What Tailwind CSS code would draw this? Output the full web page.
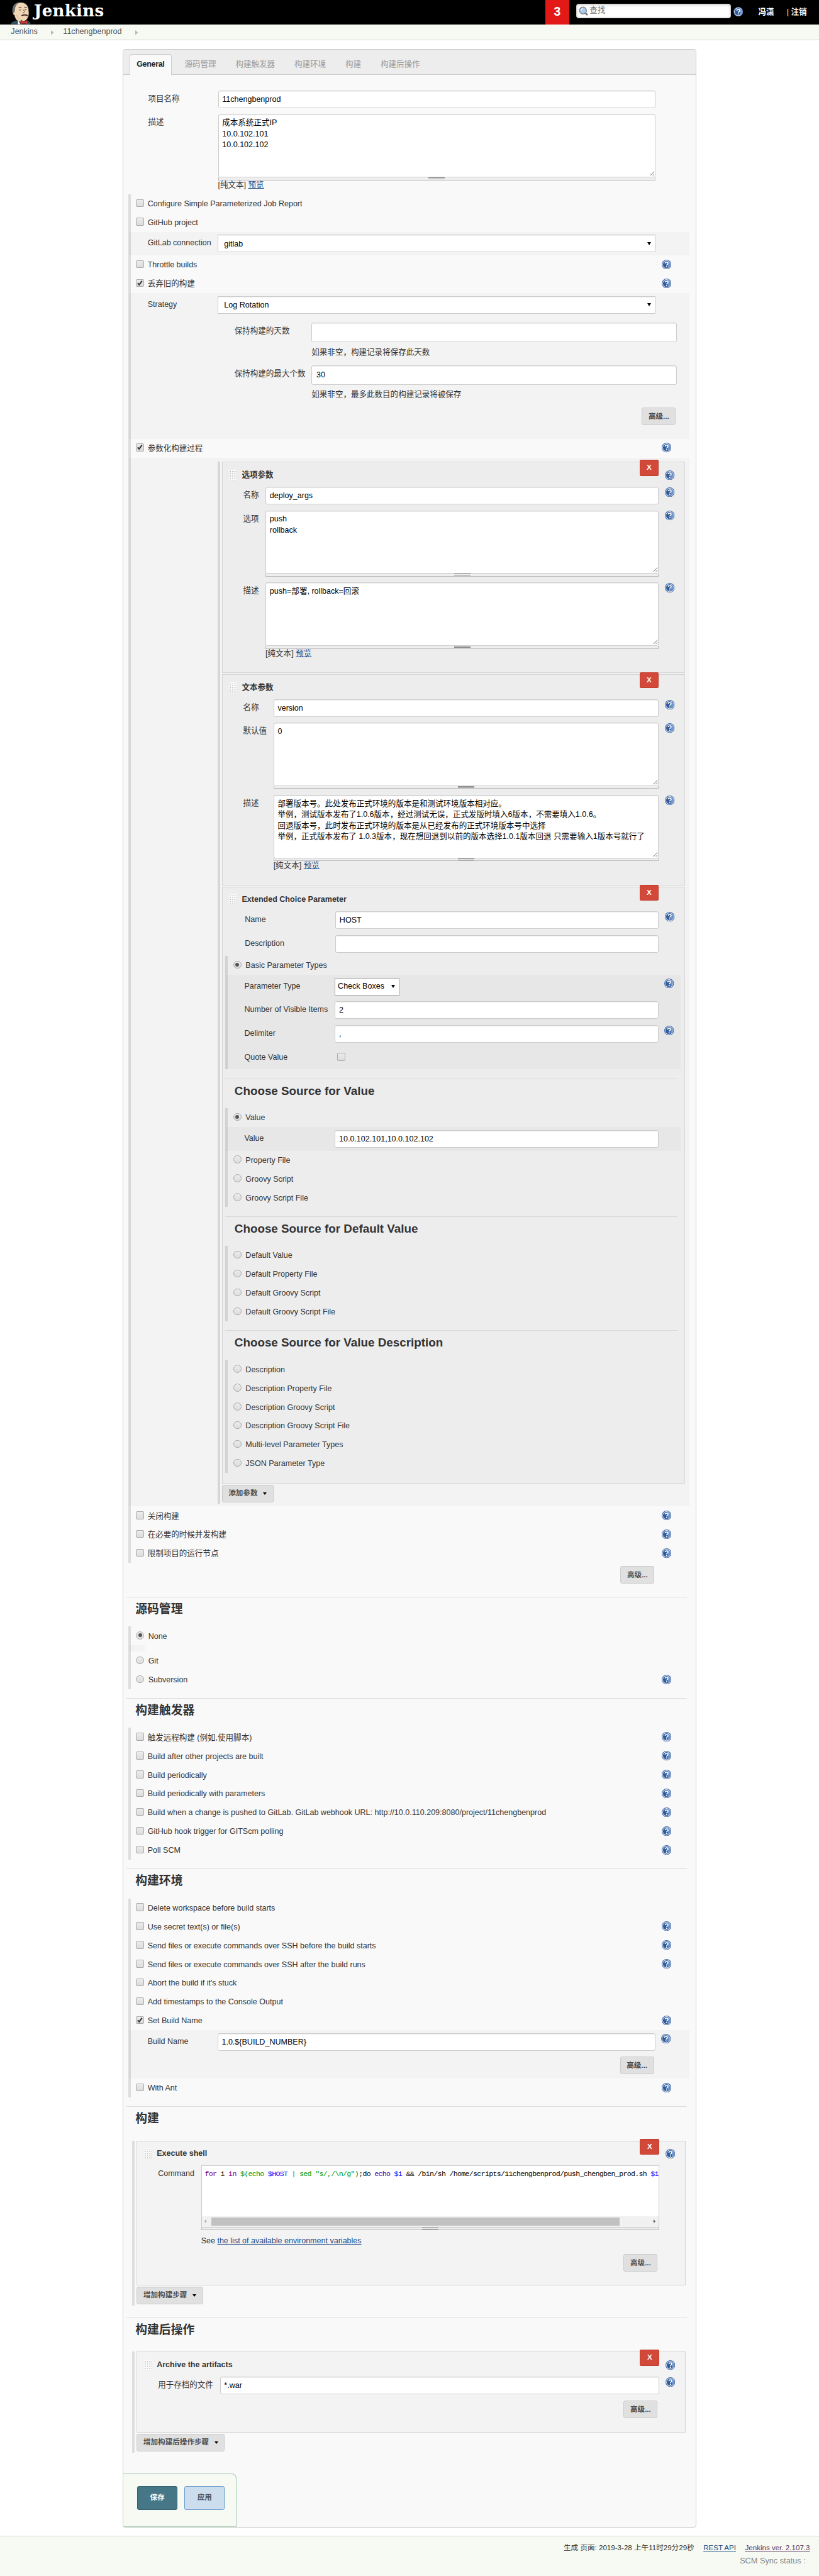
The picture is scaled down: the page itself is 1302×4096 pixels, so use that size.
<!DOCTYPE html>
<html lang="zh-CN">
<head>
<meta charset="utf-8">
<title>11chengbenprod Config [Jenkins]</title>
<script src="https://cdn.jsdelivr.net/npm/@tailwindcss/browser@4"></script>
</head>
<body class="bg-white overflow-x-hidden">
<svg class="hidden">
  <symbol id="help" viewBox="0 0 16 16">
    <circle cx="8" cy="8" r="7.9" fill="#3b64a3"/>
    <circle cx="8" cy="8" r="6.9" fill="#e4ebf5"/>
    <circle cx="8" cy="8" r="6" fill="#2f5a9c"/>
    <path d="M8 2a6 6 0 0 1 6 6a6 6 0 0 1-4 5.6C11 10 10 5 8 2z" fill="#6d92c8"/>
    <path d="M5.7 6.2C5.7 3.5 10.3 3.5 10.3 6.1C10.3 7.7 8.1 7.8 8.1 9.6" fill="none" stroke="#fff" stroke-width="1.7"/>
    <circle cx="8.1" cy="11.7" r="1.1" fill="#fff"/>
  </symbol>
  <symbol id="grip" viewBox="0 0 12 18">
    <rect width="12" height="18" fill="#fbfbfb"/>
    <g fill="#999">
      <path d="M1 2h1v1h-1zM4 2h1v1h-1zM7 2h1v1h-1zM10 2h1v1h-1zM1 5h1v1h-1zM4 5h1v1h-1zM7 5h1v1h-1zM10 5h1v1h-1zM1 8h1v1h-1zM4 8h1v1h-1zM7 8h1v1h-1zM10 8h1v1h-1zM1 11h1v1h-1zM4 11h1v1h-1zM7 11h1v1h-1zM10 11h1v1h-1zM1 14h1v1h-1zM4 14h1v1h-1zM7 14h1v1h-1zM10 14h1v1h-1zM1 17h1v1h-1zM4 17h1v1h-1zM7 17h1v1h-1zM10 17h1v1h-1z"/>
    </g>
  </symbol>
  <symbol id="tick" viewBox="0 0 11 11"><path d="M2 5.5L4.4 8.2L9 1.8" fill="none" stroke="#333" stroke-width="2.2"/></symbol>
  <symbol id="corner" viewBox="0 0 8 8"><path d="M0.5 7.5L7.5 0.5M4.5 7.5L7.5 4.5" stroke="#555" stroke-width="0.9"/></symbol>
  <symbol id="crumb" viewBox="0 0 5 8"><path d="M0 0L4.5 4L0 8z" fill="#b5b5b5"/></symbol>
</svg>

<div id="page" class="[zoom:0.96514] w-[1349px] h-[4244px] flex flex-col text-[13px] leading-[18px] text-[#333] font-['Liberation_Sans','Noto_Sans_CJK_SC',sans-serif] whitespace-nowrap">

  <header class="h-[40px] shrink-0 bg-black flex">
    <div class="flex w-[898px] pl-[18px]">
      <svg class="w-[33px] h-[40px]" viewBox="0 0 33 40">
        <path d="M0 40C1 36 7 34 11 34L24 33C29 34 32 36 33 40z" fill="#335061"/>
        <path d="M4 17C2 8 10 4 17 4C26 4 30 11 30 19C31 26 28 34 20 36C12 38 7 32 6 25C3 24 3 20 4 17z" fill="#f0d6b7" stroke="#2a2018" stroke-width="1"/>
        <path d="M3 21C1 11 7 3 16 4C9 6 7 12 7 17L5 22z" fill="#6d6b6d"/>
        <path d="M13 13C14 11.500 17 11.500 18 13M22 12.500C24 11 26 12 27 13M14 16.500h3M23 16h3M21 16C23 19 23 21 20 21" fill="none" stroke="#3b2a20" stroke-width="1"/>
        <path d="M18 26C20 23.500 23 25 25 24.500C26 26 27 25 28 25.500" fill="none" stroke="#3b2a20" stroke-width="2"/>
        <path d="M10 24C11 29 14 31 16 32" fill="none" stroke="#c9a98a" stroke-width="1"/>
        <path d="M17 33L22 36L27 33.500L28 40L22 38L16 40z" fill="#d33833" stroke="#7a1512" stroke-width=".7"/>
        <path d="M12 33L16 40H12z" fill="#fff"/>
      </svg>
      <span class="ml-[5px] font-['DejaVu_Serif',serif] font-bold text-[27px] leading-[36px] tracking-[0.3px] text-white">Jenkins</span>
    </div>
    <div class="w-[40px] bg-[#e31918] text-white font-bold text-[20px] leading-[40px] text-center">3</div>
    <div class="ml-[11px] mt-[6px] w-[255px] h-[24px] rounded-[4px] border border-[#ccc] bg-white shadow-[inset_0_1px_4px_rgba(0,0,0,0.2)] flex items-center pl-[3px] text-[#757575]">
      <svg class="w-[16px] h-[16px]" viewBox="0 0 16 16"><path d="M10.500 10.500L14.500 14.500" stroke="#777" stroke-width="2.800"/><circle cx="7" cy="7" r="5.700" fill="#a9c9ee" stroke="#858585" stroke-width="1.500"/><path d="M4 7C4 5 5.500 4 7 4" stroke="#fff" stroke-width="1.200" fill="none"/></svg>
      <span class="ml-[2px] -mt-[1px]">查找</span>
    </div>
    <svg class="ml-[4px] mt-[11px] w-[16px] h-[16px]"><use href="#help"/></svg>
    <div class="ml-[25px] leading-[40px] text-white font-bold w-[47px]">冯潇</div>
    <div class="leading-[40px] text-white font-bold"><span class="font-normal">|</span>&nbsp;注销</div>
  </header>

  <nav class="h-[26px] shrink-0 bg-[#f6faf2] border-b border-[#d3d7cf] flex items-center text-[#4d545d] pl-[18px]">
    <span>Jenkins</span>
    <svg class="ml-[22px] mt-[2px] w-[5px] h-[8px]"><use href="#crumb"/></svg>
    <span class="ml-[15px]">11chengbenprod</span>
    <svg class="ml-[22px] mt-[2px] w-[5px] h-[8px]"><use href="#crumb"/></svg>
  </nav>

  <main id="config" class="mt-[15px] ml-[202px] w-[945px] h-[4083px] shrink-0 border border-[#ccc] rounded-[4px] bg-[#f9f9f9] flex flex-col"></main>

  <footer class="mt-[14px] h-[66px] shrink-0 bg-[#f6faf2] border-t border-[#d3d7cf] pr-[15px] text-right">
    <div class="pt-[10px] flex justify-end gap-[15px] text-[12px]">
      <span>生成 页面: 2019-3-28 上午11时29分29秒</span>
      <a class="underline text-[#204a87]">REST API</a>
      <a class="underline text-[#5c3566]">Jenkins ver. 2.107.3</a>
    </div>
    <div class="pt-[3px] pr-[7px] text-[#888] text-[13.2px]">SCM Sync status :</div>
  </footer>
</div>

<script>
const box = (type, on) => type === 'radio'
  ? `<span class="w-[13px] h-[13px] rounded-full border border-[#aaa] bg-linear-to-b from-[#ececec] to-[#dcdcdc] flex items-center justify-center">${on ? '<span class="w-[6px] h-[6px] rounded-full bg-[#555]"></span>' : ''}</span>`
  : `<span class="w-[13px] h-[13px] rounded-[2px] border border-[#aaa] bg-linear-to-b from-[#ececec] to-[#dcdcdc] flex items-center justify-center">${on ? '<svg class="w-[11px] h-[11px] shrink-0"><use href="#tick"/></svg>' : ''}</span>`;
const help = cls => `<svg class="w-[16px] h-[16px] shrink-0 ${cls}"><use href="#help"/></svg>`;

// One selectable line: checkbox or radio, its label, optional help icon.
const line = (type, text, on, hasHelp) => `
  <div class="h-[31px] shrink-0 flex items-start">
    <span class="mt-[8px] ml-[9px]">${box(type, on)}</span>
    <span class="${type === 'radio' ? 'ml-[7px]' : 'ml-[6px]'} mt-[7.5px]">${text}</span>
    ${hasHelp ? help('ml-auto mr-[30px] mt-[7px]') : ''}
  </div>`;
const check = (text, hasHelp, on) => line('check', text, on, hasHelp);
const radio = (text, on, hasHelp) => line('radio', text, on, hasHelp);

const input = (w, text = '') => `<div class="${w} h-[29px] shrink-0 rounded-[3px] border border-[#ccc] bg-white shadow-[inset_0_1px_1px_rgba(0,0,0,0.075)] pl-[6px] leading-[28px] text-black">${text}</div>`;
const select = (w, text) => `<div class="${w} h-[29px] shrink-0 border border-[#ccc] bg-white shadow-[inset_0_1px_1px_rgba(0,0,0,0.075)] flex justify-between items-center pl-[10px] pr-[6px] text-black"><span class="pt-[2px]">${text}</span><span class="border-x-[3.5px] border-x-transparent border-t-[6px] border-t-black"></span></div>`;
const grabber = w => `<div class="${w} h-[5px] border border-t-0 border-[#bbb] bg-[#eee] flex justify-center items-center"><span class="w-[27px] h-[3px] border-y border-[#888]"></span></div>`;
const area = (w, text) => `<div class="${w} shrink-0">
    <div class="h-[104px] relative rounded-[3px] border border-[#ccc] bg-white shadow-[inset_0_1px_1px_rgba(0,0,0,0.075)] pl-[6px] pt-[5px] text-black whitespace-pre">${text}<svg class="absolute right-[1px] bottom-[1px] w-[8px] h-[8px]"><use href="#corner"/></svg></div>
    ${grabber('w-full')}</div>`;
const preview = pad => `<div class="${pad} -mt-[1px] h-[19px]">[纯文本] <a class="underline text-[#204a87]">预览</a></div>`;

// A labelled form row; the control sits 5px below the row's top edge.
const row = (h, pad, labelW, label, control, hasHelp) => `
  <div class="${h} ${pad} shrink-0 pt-[5px] flex items-start">
    <span class="${labelW} shrink-0 leading-[29px]">${label}</span>${control}${hasHelp ? help('ml-[10px] mt-[1px]') : ''}
  </div>`;
const button = (cls, text) => `<div class="${cls} h-[29px] shrink-0 rounded-[3px] border border-[#ccc] bg-[#e0e0e0] text-[12px] font-bold text-[#4d4d4d] leading-[27px] text-center">${text}</div>`;
const menuButton = (cls, text) => `<div class="${cls} h-[29px] shrink-0 rounded-[3px] border border-[#ccc] bg-[#e0e0e0] text-[12px] font-bold text-[#4d4d4d] flex items-center justify-between px-[10px]"><span>${text}</span><span class="border-x-[4px] border-x-transparent border-t-[5px] border-t-black"></span></div>`;
const section = (title, cls = 'mt-[15px]') => `<div class="${cls} ml-[5px] w-[923px] shrink-0 h-[49px] border-t border-[#ddd] pl-[15px] leading-[40px] text-[19.5px] font-bold">${title}</div>`;
const subSection = title => `<div class="mt-[15px] w-[745px] shrink-0 h-[49px] border-t border-[#d8d8d8] pl-[15px] leading-[39px] text-[19.5px] font-bold">${title}</div>`;
const group = inner => `<div class="ml-[8px] w-[925px] shrink-0 border-l-[5px] border-[#ddd] flex flex-col">${inner}</div>`;
const shade = (h, inner) => `<div class="${h} -ml-[3px] pl-[3px] bg-black/[0.025] shrink-0 flex flex-col">${inner}</div>`;

// Bordered, draggable block with its delete button hanging over the top edge.
const block = (cls, title, hasHelp, inner) => `
  <div class="${cls} relative shrink-0 border border-[#d5d5d5] bg-black/[0.025]">
    <div class="absolute right-[42px] -top-[4px] w-[32px] h-[26px] rounded-[2px] border border-[#c13c2c] bg-[#d24939] text-white text-[12px] font-bold leading-[24px] text-center">X</div>
    <div class="h-[35px] flex items-start pl-[12px]">
      <svg class="w-[12px] h-[18px] mt-[12px]"><use href="#grip"/></svg>
      <span class="ml-[8px] mt-[12px] font-bold">${title}</span>
      ${hasHelp ? help('ml-auto mr-[16px] mt-[13px]') : ''}
    </div>
    ${inner}
  </div>`;

const tabs = ['源码管理', '构建触发器', '构建环境', '构建', '构建后操作'];

const extended = `
  ${row('h-[39px]', 'pl-[37px]', 'w-[149px]', 'Name', input('w-[533px]', 'HOST'), true)}
  ${row('h-[39px]', 'pl-[37px]', 'w-[149px]', 'Description', input('w-[533px]'))}
  <div class="ml-[5px] w-[750px] flex flex-col">
    <div class="border-l-[5px] border-[#d3d3d3] flex flex-col">
      ${radio('Basic Parameter Types', true)}
      ${shade('h-[156px]', `
        ${row('h-[39px]', 'pl-[27px]', 'w-[149px]', 'Parameter Type', `<div class="w-[106px] h-[29px] shrink-0 border border-[#a9a9a9] bg-white flex items-center justify-between pl-[4px] pr-[6px] text-black">Check Boxes<span class="border-x-[3.5px] border-x-transparent border-t-[6px] border-t-black"></span></div><span class="w-[427px]"></span>`, true)}
        ${row('h-[39px]', 'pl-[27px]', 'w-[149px]', 'Number of Visible Items', input('w-[533px]', '2'))}
        ${row('h-[39px]', 'pl-[27px]', 'w-[149px]', 'Delimiter', input('w-[533px]', ','), true)}
        ${row('h-[39px]', 'pl-[27px]', 'w-[149px]', 'Quote Value', `<span class="ml-[4px] mt-[7px]">${box('check')}</span>`)}`)}
    </div>
    ${subSection('Choose Source for Value')}
    <div class="border-l-[5px] border-[#d3d3d3] flex flex-col">
      ${radio('Value', true)}
      ${shade('h-[39px]', row('h-[39px]', 'pl-[27px]', 'w-[149px]', 'Value', input('w-[533px]', '10.0.102.101,10.0.102.102')))}
      ${['Property File', 'Groovy Script', 'Groovy Script File'].map(t => radio(t)).join('')}
    </div>
    ${subSection('Choose Source for Default Value')}
    <div class="border-l-[5px] border-[#d3d3d3] flex flex-col">
      ${['Default Value', 'Default Property File', 'Default Groovy Script', 'Default Groovy Script File'].map(t => radio(t)).join('')}
    </div>
    ${subSection('Choose Source for Value Description')}
    <div class="border-l-[5px] border-[#d3d3d3] flex flex-col">
      ${['Description', 'Description Property File', 'Description Groovy Script', 'Description Groovy Script File', 'Multi-level Parameter Types', 'JSON Parameter Type'].map(t => radio(t)).join('')}
    </div>
  </div>`;

const versionNote = `部署版本号。此处发布正式环境的版本是和测试环境版本相对应。
举例，测试版本发布了1.0.6版本，经过测试无误，正式发版时填入6版本，不需要填入1.0.6。
回退版本号，此时发布正式环境的版本是从已经发布的正式环境版本号中选择
举例，正式版本发布了 1.0.3版本，现在想回退到以前的版本选择1.0.1版本回退 只需要输入1版本号就行了`;

const shell = `<span class="text-[#770088]">for</span> i <span class="text-[#770088]">in</span> <span class="text-[#009900]">$(echo <span class="text-[#0000ff]">$HOST</span> | sed "s/,/\\n/g")</span>;do <span class="text-[#3300aa]">echo</span> <span class="text-[#0000ff]">$i</span> &amp;&amp; /bin/sh /home/scripts/11chengbenprod/push_chengben_prod.sh <span class="text-[#0000ff]">$i</span>`;

document.getElementById('config').innerHTML = `
  <div class="h-[41px] shrink-0 bg-[#ededed] rounded-t-[4px] border-b border-[#ccc] pt-[7px] pl-[10px] flex text-[#999]">
    <span class="h-[34px] w-[70px] rounded-t-[4px] border border-b-0 border-[#ccc] bg-[#f9f9f9] text-[#222] text-center leading-[33px] font-bold tracking-[-0.35px]">General</span>
    ${tabs.map((t, i) => `<span class="${i ? 'ml-[32px]' : 'ml-[21px]'} leading-[34px]">${t}</span>`).join('')}
  </div>
  <div class="h-[21px] shrink-0"></div>
  ${row('h-[39px]', 'pl-[41px]', 'w-[115px]', '项目名称', input('w-[721px]', '11chengbenprod'))}
  ${row('h-[114px]', 'pl-[41px]', 'w-[115px]', '描述', area('w-[721px]', '成本系统正式IP\n10.0.102.101\n10.0.102.102'))}
  ${preview('ml-[156px] mb-[5px] shrink-0')}
  ${group(`
    ${check('Configure Simple Parameterized Job Report')}
    ${check('GitHub project')}
    ${shade('h-[39px]', row('h-[39px]', 'pl-[28px]', 'w-[115px]', 'GitLab connection', select('w-[721px]', 'gitlab')))}
    ${check('Throttle builds', true)}
    ${check('丢弃旧的构建', true, true)}
    ${shade('h-[240px]', `
      ${row('h-[39px]', 'pl-[28px]', 'w-[115px]', 'Strategy', select('w-[721px]', 'Log Rotation'))}
      <div class="mt-[5px] flex flex-col">
        ${row('h-[45px]', 'pl-[171px]', 'w-[127px]', '保持构建的天数', '<div class="w-[602px] h-[32px] shrink-0 rounded-[3px] border border-[#ccc] bg-white shadow-[inset_0_1px_1px_rgba(0,0,0,0.075)]"></div>')}
        <div class="h-[25px] pl-[298px]">如果非空，构建记录将保存此天数</div>
        ${row('h-[45px]', 'pl-[171px]', 'w-[127px]', '保持构建的最大个数', '<div class="w-[602px] h-[32px] shrink-0 rounded-[3px] border border-[#ccc] bg-white shadow-[inset_0_1px_1px_rgba(0,0,0,0.075)] pl-[7px] leading-[30px] text-black">30</div>')}
        <div class="h-[30px] pl-[298px]">如果非空，最多此数目的构建记录将被保存</div>
      </div>
      ${button('ml-[842px] w-[56px]', '高级...')}`)}
    ${check('参数化构建过程', true, true)}
    ${shade('h-[1728px]', `
      <div class="mt-[7px] ml-[143px] w-[772px] h-[1716px] border-l-[5px] border-[#d6d6d6] pl-[3px] flex flex-col">
        ${block('h-[348px] w-[763px]', '选项参数', true, `
          ${row('h-[39px]', 'pl-[34px]', 'w-[37px]', '名称', input('w-[648px]', 'deploy_args'), true)}
          ${row('h-[119px]', 'pl-[34px]', 'w-[37px]', '选项', area('w-[648px]', 'push\nrollback'), true)}
          ${row('h-[114px]', 'pl-[34px]', 'w-[37px]', '描述', area('w-[648px]', 'push=部署, rollback=回滚'), true)}
          ${preview('ml-[71px]')}`)}
        ${block('mt-[2px] h-[348px] w-[763px]', '文本参数', false, `
          ${row('h-[39px]', 'pl-[34px]', 'w-[50px]', '名称', input('w-[635px]', 'version'), true)}
          ${row('h-[119px]', 'pl-[34px]', 'w-[50px]', '默认值', area('w-[635px]', '0'), true)}
          ${row('h-[114px]', 'pl-[34px]', 'w-[50px]', '描述', area('w-[635px]', versionNote), true)}
          ${preview('ml-[84px]')}`)}
        ${block('mt-[2px] h-[983px] w-[763px]', 'Extended Choice Parameter', false, extended)}
        ${menuButton('mt-[2px] w-[85px]', '添加参数')}
      </div>`)}
    ${check('关闭构建', true)}
    ${check('在必要的时候并发构建', true)}
    ${check('限制项目的运行节点', true)}`)}
  ${button('mt-[5px] ml-[819px] w-[56px]', '高级...')}

  ${section('源码管理', 'mt-[22px]')}
  ${group(`${radio('None', true)}<div class="-ml-[3px] w-[26px] h-[10px] bg-black/[0.025]"></div>${radio('Git')}${radio('Subversion', false, true)}`)}

  ${section('构建触发器')}
  ${group(['触发远程构建 (例如,使用脚本)', 'Build after other projects are built', 'Build periodically', 'Build periodically with parameters', 'Build when a change is pushed to GitLab. GitLab webhook URL: http://10.0.110.209:8080/project/11chengbenprod', 'GitHub hook trigger for GITScm polling', 'Poll SCM'].map(t => check(t, true)).join(''))}

  ${section('构建环境')}
  ${group(`
    ${check('Delete workspace before build starts')}
    ${check('Use secret text(s) or file(s)', true)}
    ${check('Send files or execute commands over SSH before the build starts', true)}
    ${check('Send files or execute commands over SSH after the build runs', true)}
    ${check("Abort the build if it's stuck")}
    ${check('Add timestamps to the Console Output')}
    ${check('Set Build Name', true, true)}
    ${shade('h-[80px]', `
      ${row('h-[44px]', 'pl-[28px]', 'w-[115px]', 'Build Name', input('w-[721px]', '1.0.${BUILD_NUMBER}'), true)}
      ${button('ml-[806px] w-[56px]', '高级...')}`)}
    ${check('With Ant', true)}`)}

  ${section('构建')}
  <div class="mt-[7px] ml-[15px] w-[912px] h-[272px] shrink-0 border-l-[5px] border-[#ddd] pl-[3px] flex flex-col">
    ${block('h-[239px] w-[904px]', 'Execute shell', true, `
      <div class="flex pl-[34px] pt-[5px]">
        <span class="w-[71px] leading-[29px]">Command</span>
        <div class="w-[755px]">
          <div class="h-[102px] border border-[#ccc] bg-white flex flex-col justify-between">
            <div class="pl-[5px] pt-[4px] overflow-hidden text-black font-['Liberation_Mono',monospace] text-[12px] tracking-[-0.7px] whitespace-pre">${shell}</div>
            <div class="h-[17px] bg-[#f1f1f1] flex items-center pl-[5px] pr-[6px]">
              <span class="border-y-[4px] border-y-transparent border-r-[4px] border-r-[#a3a3a3]"></span>
              <span class="ml-[8px] w-[672px] h-[13px] bg-[#c1c1c1]"></span>
              <span class="ml-auto border-y-[4px] border-y-transparent border-l-[4px] border-l-[#505050]"></span>
            </div>
          </div>
          ${grabber('w-full')}
        </div>
      </div>
      <div class="mt-[9px] ml-[105px] h-[30px]">See <a class="underline text-[#204a87]">the list of available environment variables</a></div>
      ${button('ml-[801px] w-[56px]', '高级...')}`)}
    ${menuButton('mt-[2px] w-[109px]', '增加构建步骤')}
  </div>

  ${section('构建后操作', 'mt-[20px]')}
  <div class="mt-[7px] ml-[15px] w-[912px] h-[166px] shrink-0 border-l-[5px] border-[#ddd] pl-[3px] flex flex-col">
    ${block('h-[133px] w-[904px]', 'Archive the artifacts', true, `
      ${row('h-[44px]', 'pl-[34px]', 'w-[102px]', '用于存档的文件', input('w-[724px]', '*.war'), true)}
      ${button('ml-[801px] w-[56px]', '高级...')}`)}
    ${menuButton('mt-[2px] w-[145px]', '增加构建后操作步骤')}
  </div>

  <div class="mt-auto h-[88px] w-[187px] shrink-0 border border-l-0 border-[#a5cbb5] rounded-tr-[8px] bg-[#f6faf2] pl-[23px] pt-[20px] flex gap-[12px] text-[12px] font-bold text-center">
    <div class="w-[66px] h-[39px] rounded-[3px] border border-[#355f6e] bg-[#457787] text-white leading-[36px]">保存</div>
    <div class="w-[66px] h-[39px] rounded-[3px] border border-[#6699cc] bg-[#ccdded] text-[#4d545d] leading-[36px]">应用</div>
  </div>`;
</script>
</body>
</html>
